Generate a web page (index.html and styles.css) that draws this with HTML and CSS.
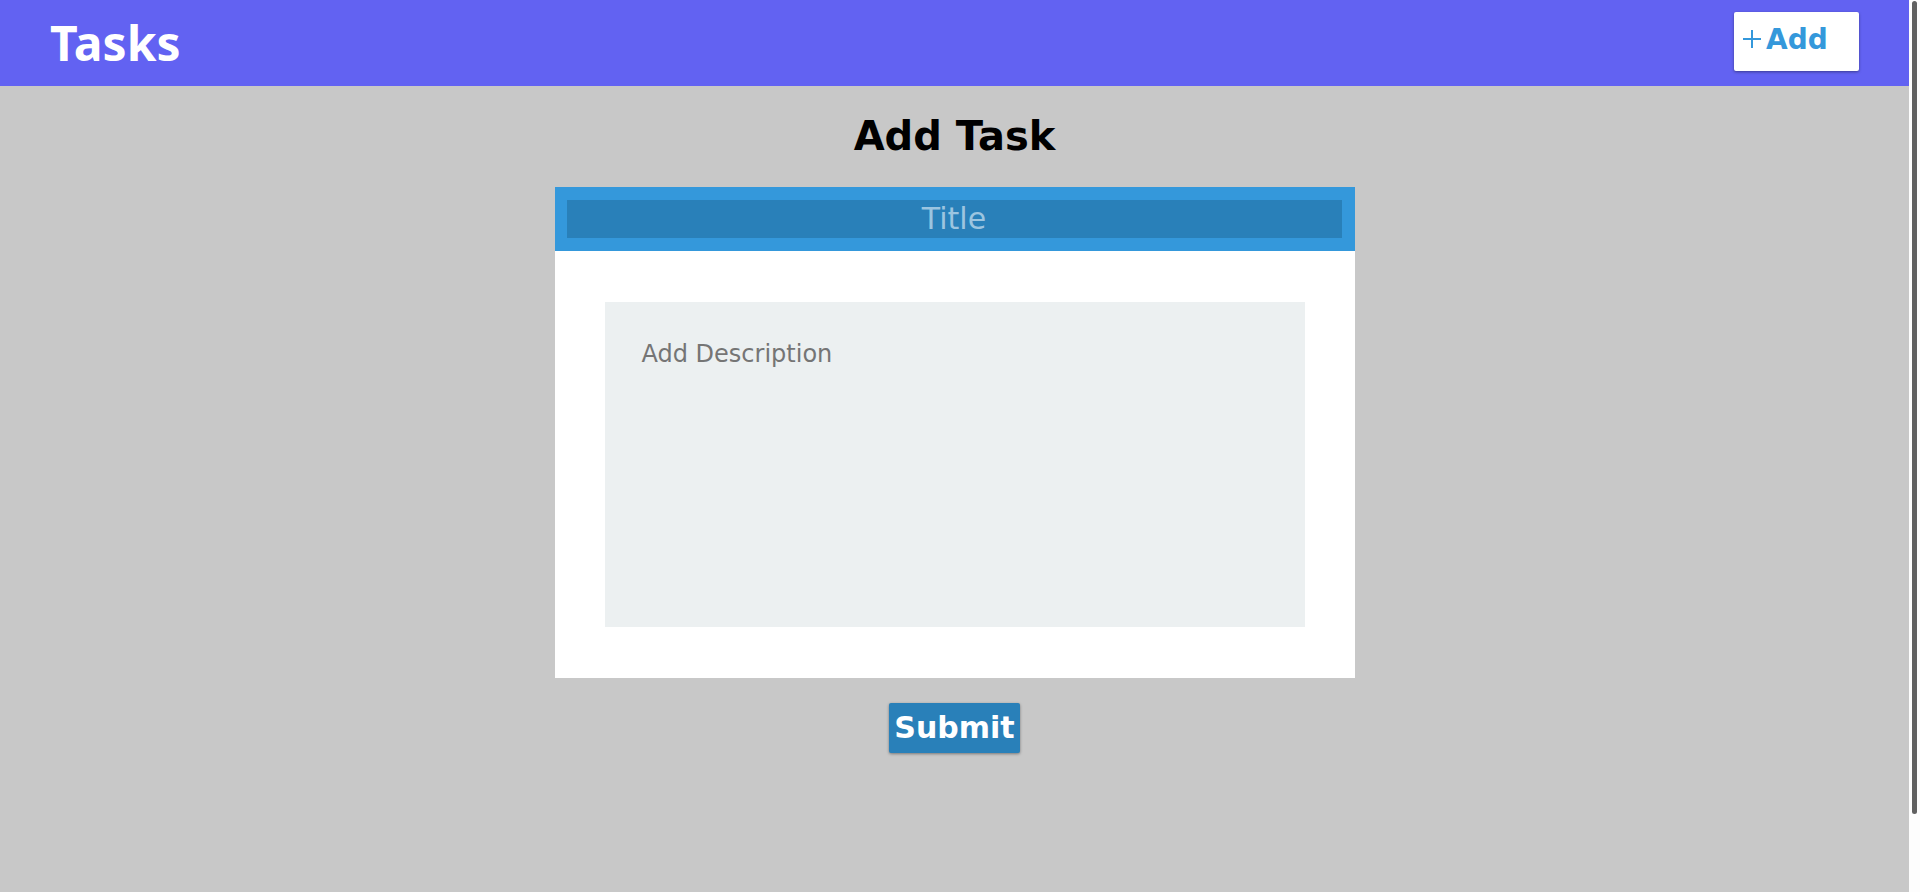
FILE: index.html
```html
<!DOCTYPE html>
<html lang="en">
<head>
<meta charset="utf-8">
<meta name="viewport" content="width=device-width, initial-scale=1">
<title>Tasks</title>
<link rel="stylesheet" href="styles.css">
</head>
<body>
<header class="topbar">
  <div class="brand">Tasks</div>
  <button type="button" class="btn btn-add">
    <svg class="icon-plus" viewBox="0 0 18 18" aria-hidden="true"><path d="M9 0V18M0 9H18"/></svg>
    <span>Add</span>
  </button>
</header>
<main class="page">
  <h1 class="heading">Add Task</h1>
  <form class="task-form">
    <div class="card">
      <div class="card-head">
        <input class="title-input" type="text" placeholder="Title" aria-label="Title">
      </div>
      <div class="card-body">
        <textarea class="description" placeholder="Add Description" aria-label="Add Description"></textarea>
      </div>
    </div>
    <button type="button" class="btn btn-submit">Submit</button>
  </form>
</main>
<div class="scroll-track" aria-hidden="true"><div class="scroll-thumb"></div></div>
</body>
</html>
```
FILE: styles.css
```css
* {
  box-sizing: border-box;
}

body {
  margin: 0;
  padding-right: 11px;
  min-height: 100vh;
  background: #c8c8c8;
  font-family: "DejaVu Sans", sans-serif;
}

.topbar {
  display: flex;
  justify-content: space-between;
  align-items: flex-start;
  height: 86px;
  padding: 12px 50px 0;
  background: #6262f2;
}

.brand {
  color: #fff;
  font: bold 48px/62px "Noto Sans", sans-serif;
}

.btn {
  border: 0;
  border-radius: 2px;
  box-shadow: 0 1px 3px rgba(0, 0, 0, 0.4);
  font-family: inherit;
  font-weight: bold;
  cursor: pointer;
}

.btn-add {
  display: flex;
  align-items: center;
  gap: 5px;
  width: 125px;
  height: 59px;
  padding: 0 9px 5px;
  background: #fff;
  color: #3498db;
  font-size: 28px;
}

.icon-plus {
  width: 18px;
  height: 18px;
  fill: none;
  stroke: currentColor;
  stroke-width: 2;
}

.page {
  padding: 0 20px;
}

.heading {
  margin: 0;
  padding: 26px 0 27px;
  font-size: 40px;
  line-height: 48px;
  text-align: center;
}

.task-form {
  display: flex;
  flex-direction: column;
  align-items: center;
  gap: 25px;
}

.card {
  width: 100%;
  max-width: 800px;
  background: #fff;
}

.card-head {
  padding: 13px 13px 13px 12px;
  background: #3498db;
}

.title-input {
  display: block;
  width: 100%;
  height: 38px;
  padding: 0 0 2px;
  border: 0;
  background: #2980b9;
  color: #fff;
  font-family: inherit;
  font-size: 30px;
  text-align: center;
}

.title-input::placeholder {
  color: #9cc5e0;
}

.card-body {
  padding: 51px 50px;
}

.description {
  display: block;
  width: 100%;
  height: 325px;
  padding: 38px 37px;
  border: 0;
  resize: none;
  background: #ecf0f1;
  font-family: inherit;
  font-size: 24px;
}

.description::placeholder {
  color: #757575;
}

.btn-submit {
  height: 50px;
  padding: 0 5px 2px;
  background: #2980b9;
  color: #fff;
  font-size: 30px;
}

.scroll-track {
  position: fixed;
  top: 0;
  right: 0;
  bottom: 0;
  width: 11px;
  padding: 1px 3px;
  background: #fdfdfd;
}

.scroll-thumb {
  height: 91.3%;
  border-radius: 3px;
  background: #616161;
}
```
